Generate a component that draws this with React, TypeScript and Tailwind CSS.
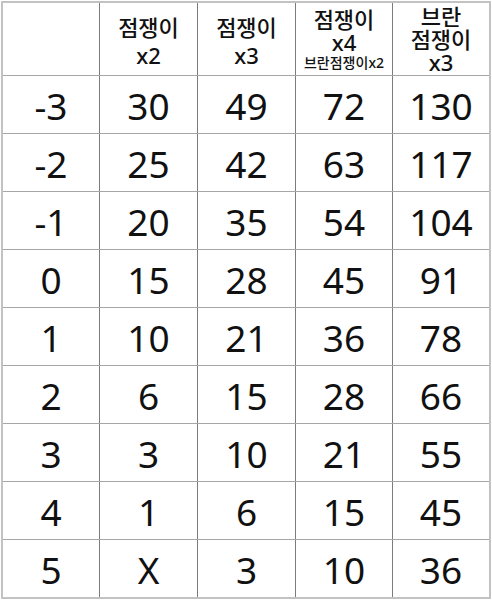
const ROWS: [string, string, string, string, string][] = [
  ["-3", "30", "49", "72", "130"],
  ["-2", "25", "42", "63", "117"],
  ["-1", "20", "35", "54", "104"],
  ["0", "15", "28", "45", "91"],
  ["1", "10", "21", "36", "78"],
  ["2", "6", "15", "28", "66"],
  ["3", "3", "10", "21", "55"],
  ["4", "1", "6", "15", "45"],
  ["5", "X", "3", "10", "36"],
];

// widths include the right border of each cell
const COL_W = ["w-[97px]", "w-[98px]", "w-[98px]", "w-[97px]", "w-[96px]"];

function Cell({ i, children }: { i: number; children?: React.ReactNode }) {
  return (
    <div
      className={`${COL_W[i]} shrink-0 flex flex-col items-center justify-center text-center ${
        i < 4 ? "border-r border-[#7c7c7c]" : ""
      }`}
    >
      {children}
    </div>
  );
}

export default function App() {
  return (
    <div
      className="bg-white w-[492px] h-[600px] pt-[1px] pl-[1px] text-[#111]"
      style={{ fontFamily: '"Noto Sans", "Noto Sans CJK KR", sans-serif' }}
    >
      <div className="w-[490px] h-[598px] border-2 border-[#c2c2c2] flex flex-col">
        <div className="h-[73px] flex border-b border-[#a6a6a6] text-[22px] font-medium leading-[24px]">
          <Cell i={0} />
          <Cell i={1}>
            <span className="pt-[4px] leading-[28px]">점쟁이</span>
            <span className="leading-[28px]">x2</span>
          </Cell>
          <Cell i={2}>
            <span className="pt-[4px] leading-[28px]">점쟁이</span>
            <span className="leading-[28px]">x3</span>
          </Cell>
          <Cell i={3}>
            <span className="leading-[24px]">점쟁이</span>
            <span className="leading-[23px]">x4</span>
            <span className="text-[14px] leading-[18px]">브란점쟁이x2</span>
          </Cell>
          <Cell i={4}>
            <span className="leading-[23px]">브란</span>
            <span className="leading-[23px]">점쟁이</span>
            <span className="leading-[23px]">x3</span>
          </Cell>
        </div>
        {ROWS.map((row, r) => (
          <div
            key={r}
            className={`flex text-[37px] leading-none ${
              r < ROWS.length - 1 ? "h-[58px] border-b border-[#a6a6a6]" : "flex-1"
            }`}
          >
            {row.map((v, i) => (
              <Cell key={i} i={i}>
                <span className="pt-[2px]">{v}</span>
              </Cell>
            ))}
          </div>
        ))}
      </div>
    </div>
  );
}
